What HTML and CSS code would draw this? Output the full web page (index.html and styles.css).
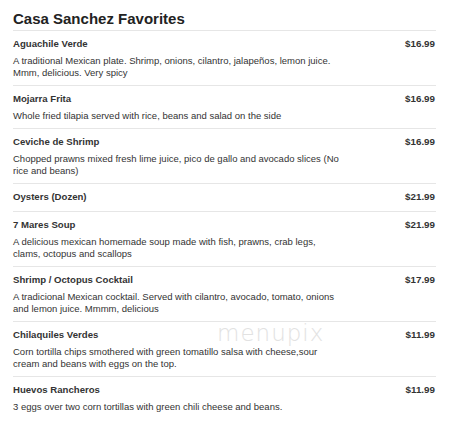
FILE: index.html
```html
<!DOCTYPE html>
<html>
<head>
<meta charset="utf-8">
<link rel="stylesheet" href="styles.css">
</head>
<body>
<div class="menu">
  <h1 class="title">Casa Sanchez Favorites</h1>
  <div class="item">
    <div class="row"><span class="name">Aguachile Verde</span><span class="price">$16.99</span></div>
    <p class="desc">A traditional Mexican plate. Shrimp, onions, cilantro, jalapeños, lemon juice. Mmm, delicious. Very spicy</p>
  </div>
  <div class="item">
    <div class="row"><span class="name">Mojarra Frita</span><span class="price">$16.99</span></div>
    <p class="desc">Whole fried tilapia served with rice, beans and salad on the side</p>
  </div>
  <div class="item">
    <div class="row"><span class="name">Ceviche de Shrimp</span><span class="price">$16.99</span></div>
    <p class="desc">Chopped prawns mixed fresh lime juice, pico de gallo and avocado slices (No rice and beans)</p>
  </div>
  <div class="item solo">
    <div class="row"><span class="name">Oysters (Dozen)</span><span class="price">$21.99</span></div>
  </div>
  <div class="item">
    <div class="row"><span class="name">7 Mares Soup</span><span class="price">$21.99</span></div>
    <p class="desc">A delicious mexican homemade soup made with fish, prawns, crab legs, clams, octopus and scallops</p>
  </div>
  <div class="item">
    <div class="row"><span class="name">Shrimp / Octopus Cocktail</span><span class="price">$17.99</span></div>
    <p class="desc">A tradicional Mexican cocktail. Served with cilantro, avocado, tomato, onions and lemon juice. Mmmm, delicious</p>
  </div>
  <div class="item wm-host">
    <span class="watermark">menupix</span>
    <div class="row"><span class="name">Chilaquiles Verdes</span><span class="price">$11.99</span></div>
    <p class="desc">Corn tortilla chips smothered with green tomatillo salsa with cheese,sour cream and beans with eggs on the top.</p>
  </div>
  <div class="item last">
    <div class="row"><span class="name">Huevos Rancheros</span><span class="price">$11.99</span></div>
    <p class="desc">3 eggs over two corn tortillas with green chili cheese and beans.</p>
  </div>
</div>
</body>
</html>
```
FILE: styles.css
```css
html, body {
  margin: 0;
  padding: 0;
  background: #fff;
}
body {
  font-family: "Liberation Sans", Arial, sans-serif;
  color: #333;
}
.menu {
  margin: 0 14px 0 13px;
  padding-top: 9px;
}
.title {
  font-size: 15px;
  font-weight: bold;
  color: #222;
  margin: 0;
  line-height: 20px;
  padding-bottom: 1px;
  border-bottom: 1px solid #e6e6e6;
}
.item {
  padding: 6px 0 6px;
  border-bottom: 1px solid #e6e6e6;
}
.item.solo {
  padding-bottom: 7px;
}
.item.last {
  border-bottom: none;
}
.row {
  display: flex;
  justify-content: space-between;
  align-items: center;
  line-height: 14px;
}
.name {
  font-size: 9.6px;
  font-weight: bold;
  color: #333;
}
.price {
  font-size: 9.8px;
  font-weight: bold;
  color: #333;
  padding-right: 1px;
}
.desc {
  margin: 4px 0 0;
  font-size: 9.5px;
  line-height: 12px;
  color: #333;
  max-width: 332px;
}
.wm-host {
  position: relative;
}
.watermark {
  position: absolute;
  left: 204px;
  top: -2px;
  font-family: "DejaVu Sans", sans-serif;
  font-weight: 200;
  font-size: 23px;
  letter-spacing: 1px;
  color: #e2e2e2;
}
```
